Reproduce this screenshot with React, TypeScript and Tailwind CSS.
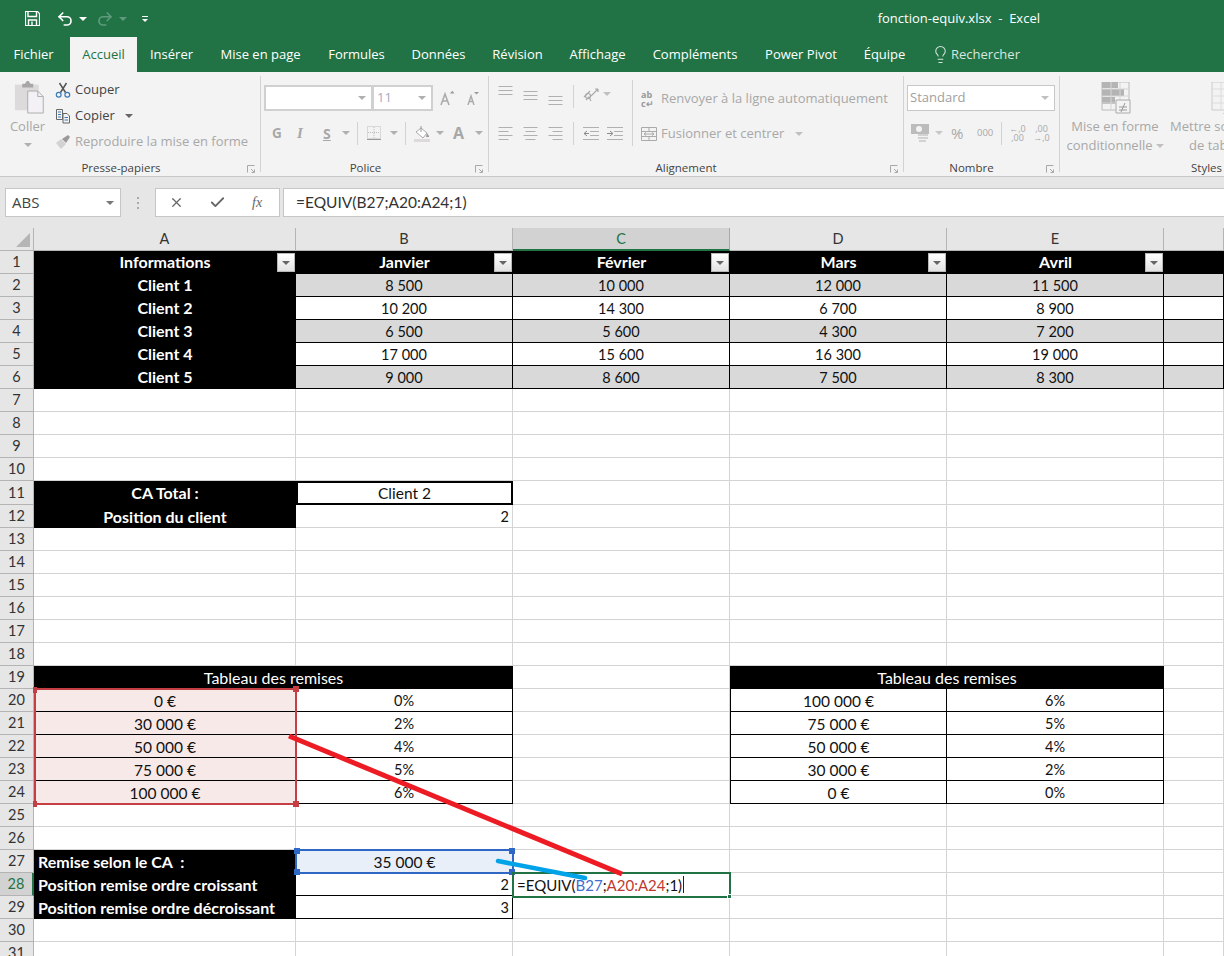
import { Check, Lightbulb, Redo2, Undo2, X } from 'lucide-react';
import { Fragment, ReactNode } from 'react';

const tabs = [
  { label: 'Fichier', w: 'w-[70px] pr-[3px]' },
  { label: 'Accueil', w: 'w-[67px] bg-[#f3f3f3] text-[#217346]' },
  { label: 'Insérer', w: 'w-[69px]' },
  { label: 'Mise en page', w: 'w-[109px]' },
  { label: 'Formules', w: 'w-[83px]' },
  { label: 'Données', w: 'w-[81px]' },
  { label: 'Révision', w: 'w-[77px]' },
  { label: 'Affichage', w: 'w-[83px]' },
  { label: 'Compléments', w: 'w-[112px]' },
  { label: 'Power Pivot', w: 'w-[100px]' },
  { label: 'Équipe', w: 'w-[67px]' },
];

type Cell = { t?: string; c?: string; span?: number; filter?: boolean };

const blank = 'border-r border-b border-[#d4d4d4]';
const boxed = 'border-r border-b border-black justify-center pt-[2px]';
const head = 'bg-black text-white font-bold text-[16px] justify-center';
const top = 'bg-black text-white font-bold text-[16px] justify-center pb-[1px]';
const side = 'bg-black text-white font-bold text-[16px] pl-[4px]';
const grey = 'bg-[#d9d9d9] border-r border-b border-black justify-center pt-[1px]';
const plain = 'bg-white border-r border-b border-black justify-center pt-[1px]';
const pink = 'bg-[#f8e9e9] border-b border-black justify-center text-[15.5px] pt-[1px]';
const num = 'border-r border-b border-black justify-end pr-[3px] pt-[1px]';
const banner = 'bg-black text-white text-[16px] justify-center';

const empty = (n: number): Cell[] => Array.from({ length: n }, () => ({ c: blank }));

const clientRow = (name: string, vals: string[], c: string): Cell[] => [
  { t: name, c: top },
  ...vals.map((t) => ({ t, c })),
  { c },
];

const remiseRow = (a: string, b: string, d: string, e: string): Cell[] => [
  { t: a, c: pink },
  { t: b, c: boxed },
  { c: blank },
  { t: d, c: 'border-l border-r border-b border-black justify-center text-[15.5px] pt-[1px]' },
  { t: e, c: boxed },
  { c: blank },
];

const rows: Record<number, Cell[]> = {
  1: [
    { t: 'Informations', c: top, filter: true },
    { t: 'Janvier', c: top, filter: true },
    { t: 'Février', c: top, filter: true },
    { t: 'Mars', c: top, filter: true },
    { t: 'Avril', c: top, filter: true },
    { c: head },
  ],
  2: clientRow('Client 1', ['8 500', '10 000', '12 000', '11 500'], grey),
  3: clientRow('Client 2', ['10 200', '14 300', '6 700', '8 900'], plain),
  4: clientRow('Client 3', ['6 500', '5 600', '4 300', '7 200'], grey),
  5: clientRow('Client 4', ['17 000', '15 600', '16 300', '19 000'], plain),
  6: clientRow('Client 5', ['9 000', '8 600', '7 500', '8 300'], grey),
  11: [
    { t: 'CA Total :', c: head },
    { t: 'Client 2', c: 'border-2 border-black justify-center text-[15.5px]' },
    ...empty(4),
  ],
  12: [
    { t: 'Position du client', c: head },
    { t: '2', c: 'border-b border-[#d4d4d4] border-r justify-end pr-[3px] pt-[2px]' },
    ...empty(4),
  ],
  19: [
    { t: 'Tableau des remises', c: banner, span: 2 },
    { c: blank },
    { t: 'Tableau des remises', c: banner, span: 2 },
    { c: blank },
  ],
  20: remiseRow('0 €', '0%', '100 000 €', '6%'),
  21: remiseRow('30 000 €', '2%', '75 000 €', '5%'),
  22: remiseRow('50 000 €', '4%', '50 000 €', '4%'),
  23: remiseRow('75 000 €', '5%', '30 000 €', '2%'),
  24: remiseRow('100 000 €', '6%', '0 €', '0%'),
  27: [
    { t: 'Remise selon le CA  :', c: side },
    { t: '35 000 €', c: 'bg-[#e8eff9] justify-center text-[15.5px]' },
    ...empty(4),
  ],
  28: [
    { t: 'Position remise ordre croissant', c: side },
    { t: '2', c: num },
    { c: '' },
    ...empty(3),
  ],
  29: [
    { t: 'Position remise ordre décroissant', c: side },
    { t: '3', c: num },
    ...empty(4),
  ],
};

const rowNumbers = Array.from({ length: 31 }, (_, i) => i + 1);

function Caret({ c = 'border-t-[#b0b0b0]' }: { c?: string }) {
  return <span className={`inline-block w-0 h-0 border-x-[4px] border-x-transparent border-t-[4px] ${c}`} />;
}

function Group({ w, label, launcher = true, pr = 'pr-0', children }: { w: string; label: string; launcher?: boolean; pr?: string; children: ReactNode }) {
  return (
    <div className={`${w} shrink-0 flex flex-col border-r border-[#d2d2d2] mt-[4px] mb-[4px]`}>
      <div className="flex-1 min-h-0">{children}</div>
      <div className="h-[8px] flex items-center">
        <span className={`flex-1 text-center text-[11.5px] text-[#444] whitespace-nowrap ${pr}`}>{label}</span>
        {launcher && (
          <svg className="w-[18px] shrink-0" width="18" height="9" viewBox="0 0 18 9" fill="none" stroke="#a8a8a8">
            <path d="M5.5 8.5v-7h7M9 5l3 3M9.5 8.5h3v-3" />
          </svg>
        )}
      </div>
    </div>
  );
}

function Lines({ w = [14, 14, 14], align = 'left', gap = 4 }: { w?: number[]; align?: string; gap?: number }) {
  const total = (w.length - 1) * gap + 1;
  return (
    <svg width="15" height={total} viewBox={`0 0 15 ${total}`} stroke="#b0b0b0">
      {w.map((len, i) => {
        const x = align === 'left' ? 0.5 : align === 'right' ? 14.5 - len : 7.5 - len / 2;
        return <path key={i} d={`M${x} ${i * gap + 0.5}h${len}`} />;
      })}
    </svg>
  );
}

function Indent({ flip }: { flip?: boolean }) {
  return (
    <svg width="16" height="13" viewBox="0 0 16 13" fill="none" stroke="#b0b0b0">
      <path d="M0 .5h16M7 4.5h9M7 8.5h9M0 12.5h16" />
      {flip ? <path d="M0 6.5h5M3 4l3 2.5L3 9" stroke="#8a8a8a" /> : <path d="M6 6.5H1M4 4L1 6.5 4 9" stroke="#8a8a8a" />}
    </svg>
  );
}

function VDiv({ h = 'h-[23px]', m = '' }: { h?: string; m?: string }) {
  return <span className={`w-px ${h} bg-[#d2d2d2] ${m}`} />;
}

export default function App() {
  return (
    <div className="w-[1224px] h-[956px] overflow-hidden bg-white relative [font-family:'Open_Sans',sans-serif]">
      {/* title bar */}
      <div className="h-[37px] bg-[#217346] flex items-center text-white">
        <svg className="ml-[25px]" width="15" height="15" viewBox="0 0 15 15" fill="none" stroke="#fff">
          <path d="M.5.5h12l2 2v12H.5z" strokeWidth="1.2" />
          <path d="M3 1v4.5h8.5V1" strokeWidth="1.4" />
          <path d="M3.5 14V9h8v5M7 10.5V14" strokeWidth="1.4" />
        </svg>
        <Undo2 className="ml-[16px]" size={18} strokeWidth={2.2} color="#ffffff" />
        <span className="ml-[5px] w-0 h-0 border-x-[4px] border-x-transparent border-t-[4px] border-t-white" />
        <Redo2 className="ml-[9px]" size={18} strokeWidth={2.2} color="#5f9a7d" />
        <span className="ml-[5px] w-0 h-0 border-x-[4px] border-x-transparent border-t-[4px] border-t-[#5f9a7d]" />
        <span className="ml-[15px] flex flex-col items-center gap-[2px]">
          <span className="w-[6px] h-px bg-white" />
          <span className="w-0 h-0 border-x-[3px] border-x-transparent border-t-[3px] border-t-white" />
        </span>
        <span className="ml-auto mr-[184px] text-[13px] whitespace-pre">fonction-equiv.xlsx  -  Excel</span>
      </div>

      {/* tabs */}
      <div className="h-[35px] bg-[#217346] flex text-[13px] text-white">
        {tabs.map((tab) => (
          <div key={tab.label} className={`${tab.w} flex items-center justify-center whitespace-nowrap`}>
            {tab.label}
          </div>
        ))}
        <div className="ml-[13px] flex items-center gap-[1px] text-[#d8e6de]">
          <Lightbulb size={19} strokeWidth={1.3} />
          <span>Rechercher</span>
        </div>
      </div>

      {/* ribbon */}
      <div className="h-[105px] bg-[#f3f3f3] border-b border-[#c8c8c8] flex overflow-hidden">
        <Group w="w-[261px]" label="Presse-papiers" pr="pr-0">
          <div className="flex h-full">
            <div className="w-[55px] flex flex-col items-center text-[13px] text-[#a8a8a8]">
              <svg className="mt-[4px] ml-[4px] shrink-0" width="32" height="34" viewBox="0 0 35 35">
                <path d="M1 4h26v28H1z" fill="#dcdadb" />
                <path d="M9 3h3l2-3h2l2 3h3v4H9z" fill="#a8a6a7" />
                <path d="M15 11h11l6 6v18H15z" fill="#f4f1f6" stroke="#a8a8a8" />
                <path d="M26 11v6h6" fill="none" stroke="#a8a8a8" />
              </svg>
              <span className="mt-[4px] leading-[17px]">Coller</span>
              <span className="mt-[8px] flex"><Caret /></span>
            </div>
            <div className="flex flex-col text-[13px] text-[#444]">
              <div className="h-[26px] mt-[1px] flex items-center gap-[4px]">
                <svg width="16" height="16" viewBox="0 0 16 16" fill="none">
                  <path d="M5.5 10.5L11.5 1M10.5 10.5L4.5 1" stroke="#555" strokeWidth="1.5" />
                  <circle cx="3.7" cy="12.7" r="2.4" stroke="#3b79b8" strokeWidth="1.2" />
                  <circle cx="12.3" cy="12.7" r="2.4" stroke="#3b79b8" strokeWidth="1.2" />
                </svg>
                <span>Couper</span>
              </div>
              <div className="h-[26px] flex items-center gap-[4px]">
                <svg width="16" height="16" viewBox="0 0 16 16" fill="none" stroke="#666">
                  <path d="M1.5 1.5h6v10h-6zM8 5.5h4l2.5 2.5v7H8z" fill="#f3f3f3" />
                  <path d="M3 4h3M3 6.5h3M3 9h3M9.5 9.5h3.5M9.5 12h3.5" stroke="#3b79b8" />
                </svg>
                <span>Copier</span>
                <span className="ml-[6px] flex"><Caret c="border-t-[#666]" /></span>
              </div>
              <div className="h-[26px] flex items-center gap-[4px] text-[#a8a8a8]">
                <svg width="16" height="16" viewBox="0 0 16 16">
                  <path d="M1 9l5-4 5 5-5 5z" fill="#d2d2d2" />
                  <path d="M7 5l6-4 2 2-4 6z" fill="#9a9a9a" />
                </svg>
                <span>Reproduire la mise en forme</span>
              </div>
            </div>
          </div>
        </Group>

        <Group w="w-[228px]" label="Police">
          <div className="flex h-[26px] mt-[9px] ml-[3px] items-center">
            <div className="w-[109px] h-[26px] bg-white border-2 border-[#d0d0d0] flex items-center justify-end pr-[5px]">
              <Caret />
            </div>
            <div className="w-[61px] h-[26px] -ml-[1px] bg-white border-2 border-[#d0d0d0] flex items-center justify-between px-[3px] pr-[5px] text-[13px] text-[#a8a8c0]">
              11
              <Caret />
            </div>
            <svg className="ml-[7px]" width="15" height="16" viewBox="0 0 15 16" fill="none" stroke="#aaa" strokeWidth="1.5">
              <path d="M1 15L5 4l4 11M2.5 11h5" />
              <path d="M10 3.5h4.5L12.2.8z" fill="#999" stroke="none" />
            </svg>
            <svg className="ml-[12px]" width="12" height="14" viewBox="0 0 12 14" fill="none" stroke="#aaa" strokeWidth="1.4">
              <path d="M1 14l3-9 3 9M2 10.5h4" />
              <path d="M7 1h5L9.5 3.5z" fill="#999" stroke="none" />
            </svg>
          </div>
          <div className="flex h-[24px] mt-[10px] items-center text-[#a8a8a8] font-bold text-[14px]">
            <span className="ml-[11px] w-[25px] text-[13.5px]">G</span>
            <span className="w-[26px] italic [font-family:'Liberation_Serif',serif] text-[15px]">I</span>
            <span className="w-[15px] underline">S</span>
            <span className="ml-[4px] flex"><Caret /></span>
            <VDiv m="ml-[7px]" />
            <svg className="ml-[9px]" width="14" height="14" viewBox="0 0 14 14" fill="none" stroke="#bdbdbd" strokeDasharray="1 1">
              <path d="M.5.5h13v12H.5zM7 1v11M1 6.5h12" />
              <path d="M0 13.5h14" strokeDasharray="none" stroke="#999" />
            </svg>
            <span className="ml-[9px] flex"><Caret /></span>
            <VDiv m="ml-[7px]" />
            <svg className="ml-[8px]" width="17" height="17" viewBox="0 0 17 17">
              <path d="M2 7l5-4 6 5-4 5z" fill="#fff" stroke="#aaa" />
              <path d="M7 1v6" stroke="#999" />
              <path d="M13 8l2 3v1h-3z" fill="#999" />
              <path d="M0 14h16v3H0z" fill="#dddada" />
            </svg>
            <span className="ml-[5px] flex"><Caret /></span>
            <span className="ml-[9px] w-[17px] text-[16px]">A</span>
            <span className="ml-[5px] flex"><Caret /></span>
          </div>
        </Group>

        <Group w="w-[415px]" label="Alignement" pr="pr-[2px]">
          <div className="flex h-full">
            <div className="w-[143px] flex flex-col">
              <div className="flex mt-[9px] h-[24px] items-start pl-[9px]">
                <span className="mt-[1px]"><Lines /></span>
                <span className="ml-[10px] mt-[6px]"><Lines /></span>
                <span className="ml-[10px] mt-[11px]"><Lines /></span>
                <VDiv m="ml-[10px]" />
                <svg className="ml-[9px] mt-[2px]" width="16" height="16" viewBox="0 0 16 16" fill="none" stroke="#aaa" strokeWidth="1.2">
                  <path d="M1 10l6-6M3 13l3-3 2 4M8 9l7-7M15 2h-3M15 2v3" />
                  <circle cx="5" cy="9" r="2.5" />
                </svg>
                <span className="ml-[4px] mt-[7px] flex"><Caret c="border-t-[#c0c0c0]" /></span>
              </div>
              <div className="flex mt-[12px] h-[24px] items-center pl-[9px]">
                <Lines w={[14, 10, 14, 10]} align="left" />
                <span className="ml-[10px]"><Lines w={[14, 10, 14, 10]} align="center" /></span>
                <span className="ml-[10px]"><Lines w={[14, 10, 14, 10]} align="right" /></span>
                <VDiv m="ml-[10px]" />
                <span className="ml-[9px]"><Indent /></span>
                <span className="ml-[8px]"><Indent flip /></span>
              </div>
            </div>
            <VDiv h="h-[66px]" m="mt-[4px]" />
            <div className="flex flex-col text-[13px] text-[#a8a8a8] whitespace-nowrap">
              <div className="flex items-center h-[26px] mt-[10px] ml-[8px]">
                <span className="w-[20px] flex flex-col text-[9px] leading-[9px] font-bold text-[#999]">
                  <span>ab</span>
                  <span>c↵</span>
                </span>
                <span>Renvoyer à la ligne automatiquement</span>
              </div>
              <div className="flex items-center h-[26px] mt-[9px] ml-[8px]">
                <svg className="mr-[4px]" width="16" height="16" viewBox="0 0 16 16" fill="none" stroke="#aaa">
                  <path d="M.5 1.5h15v13H.5zM.5 5.5h15M.5 10.5h15M8 1.5v4M8 10.5v4M3 8h10M3 8l2-1.5M3 8l2 1.5M13 8l-2-1.5M13 8l-2 1.5" />
                </svg>
                <span>Fusionner et centrer</span>
                <span className="ml-[11px] flex"><Caret c="border-t-[#c0c0c0]" /></span>
              </div>
            </div>
          </div>
        </Group>

        <Group w="w-[156px]" label="Nombre" pr="pr-[2px]">
          <div className="ml-[3px] mt-[9px] w-[148px] h-[26px] bg-white border border-[#c8c8c8] flex items-center justify-between pl-[2px] pr-[5px] text-[13px] text-[#a0a0a0]">
            Standard
            <Caret c="border-t-[#c0c0c0]" />
          </div>
          <div className="flex items-center h-[24px] mt-[10px] text-[#a8a8a8]">
            <svg className="ml-[7px]" width="19" height="18" viewBox="0 0 19 18" fill="none">
              <path d="M0 0h18v10H0z" fill="#bcbcbc" />
              <circle cx="8" cy="5" r="3" fill="#f3f3f3" />
              <path d="M7 11h10M7 14h10M8 17h7" stroke="#c8c8c8" strokeWidth="1.5" />
            </svg>
            <span className="ml-[5px] flex"><Caret c="border-t-[#c8c8c8]" /></span>
            <span className="ml-[8px] text-[15px] w-[16px]">%</span>
            <span className="ml-[10px] text-[9.5px] w-[14px]">000</span>
            <VDiv m="ml-[10px]" />
            <span className="ml-[8px] w-[15px] flex flex-col items-center text-[9px] leading-[9px]">
              <span>←,0</span>
              <span>,00</span>
            </span>
            <span className="ml-[9px] w-[15px] flex flex-col items-center text-[9px] leading-[9px]">
              <span>,00</span>
              <span>→,0</span>
            </span>
          </div>
        </Group>

        <div className="flex-1 flex flex-col mt-[4px] mb-[4px]">
          <div className="flex-1 min-h-0 flex text-[13px] text-[#a8a8a8] whitespace-nowrap">
            <div className="w-[110px] flex flex-col items-center">
              <svg width="30" height="36" viewBox="0 0 30 36" className="ml-[2px] mt-[6px] shrink-0">
                <path d="M1 0h27v28H1z" fill="#f3f3f3" stroke="#bbb" />
                <path d="M1 0h16v6H1zM1 7h22v7H1zM1 15h13v7H1z" fill="#b4b4b4" />
                <path d="M1 7h27M1 14h27M1 21h27M10 0v28M19 0v28" stroke="#d5d5d5" />
                <path d="M15 18h14v13H15z" fill="#f3f3f3" stroke="#aaa" />
                <path d="M18 25h8M18 28h8M24 21l-4 9" stroke="#999" fill="none" />
              </svg>
              <span className="leading-[19px] mt-[-1px]">Mise en forme</span>
              <span className="leading-[19px] flex items-center gap-[3px]">conditionnelle <Caret c="border-t-[#c0c0c0]" /></span>
            </div>
            <div className="w-[54px] flex flex-col">
              <svg width="30" height="36" viewBox="0 0 30 36" className="ml-[41px] mt-[6px] shrink-0">
                <path d="M1 0h27v28H1z" fill="#f3f3f3" stroke="#ccc" />
                <path d="M1 7h27M1 14h27M1 21h27M10 0v28M19 0v28" stroke="#ddd" />
                <path d="M12 32l16-16v16z" fill="#aaa" />
              </svg>
              <span className="leading-[19px] mt-[-1px]">Mettre sous</span>
              <span className="leading-[19px] ml-[19px]">de tableau</span>
            </div>
          </div>
          <div className="h-[8px] flex items-center pl-[131px] text-[11.5px] text-[#444]">Styles</div>
        </div>
      </div>

      {/* formula bar */}
      <div className="h-[51px] bg-[#e6e6e6] flex items-start pt-[11px] text-[#444]">
        <div className="ml-[5px] w-[116px] h-[29px] bg-white border border-[#c6c6c6] flex items-center justify-between px-[6px] text-[15px]">
          ABS
          <Caret c="border-t-[#777]" />
        </div>
        <div className="w-[34px] h-[29px] flex flex-col items-center justify-center gap-[3px]">
          <span className="w-[2px] h-[2px] bg-[#aaa]" />
          <span className="w-[2px] h-[2px] bg-[#aaa]" />
          <span className="w-[2px] h-[2px] bg-[#aaa]" />
        </div>
        <div className="w-[125px] h-[29px] bg-white border border-[#c6c6c6] flex items-center">
          <X className="ml-[13px]" size={15} color="#666" strokeWidth={2} />
          <Check className="ml-[25px]" size={17} color="#666" strokeWidth={2.6} />
          <span className="ml-[26px] italic text-[14px] [font-family:'Liberation_Serif',serif] text-[#666]">fx</span>
        </div>
        <div className="ml-[3px] flex-1 h-[29px] bg-white border-y border-l border-[#c6c6c6] flex items-center pl-[12px] text-[15.5px] text-[#333] [font-family:'Lato',sans-serif]">
          =EQUIV(B27;A20:A24;1)
        </div>
      </div>

      {/* sheet */}
      <div className="relative [font-family:'Lato',sans-serif] text-[14.5px] leading-[20px] text-[#111]">
        <div className="grid grid-cols-[34px_262px_217px_217px_217px_217px_60px] auto-rows-[minmax(23px,auto)]">
          <div className="bg-[#e6e6e6] border-r border-b border-[#b4b4b4] flex items-end justify-end pr-[3px] pb-[3px]">
            <span className="w-0 h-0 border-l-[14px] border-l-transparent border-b-[14px] border-b-[#b5b5b5]" />
          </div>
          {['A', 'B', 'C', 'D', 'E', ''].map((col) => (
            <div
              key={col}
              className={
                col === 'C'
                  ? 'bg-[#d2d2d2] text-[#217346] border-r border-[#a8a8a8] border-b-2 border-b-[#217346] flex items-center justify-center'
                  : 'bg-[#e6e6e6] text-[#333] border-r border-b border-[#b4b4b4] flex items-center justify-center'
              }
            >
              {col}
            </div>
          ))}
          {rowNumbers.map((n) => (
            <Fragment key={n}>
              <div
                className={`${n === 11 ? 'h-[24px]' : 'h-[23px]'} ${
                  n === 28
                    ? 'bg-[#d2d2d2] text-[#217346] border-r-2 border-r-[#217346] border-b border-b-[#b4b4b4] flex items-center justify-center'
                    : 'bg-[#e6e6e6] text-[#333] border-r border-b border-[#b4b4b4] flex items-center justify-center'
                }`}
              >
                {n}
              </div>
              {(rows[n] ?? empty(6)).map((cell, i) => (
                <div
                  key={i}
                  className={`relative flex items-center whitespace-pre ${cell.span === 2 ? 'col-span-2' : ''} ${cell.c ?? blank}`}
                >
                  {cell.t}
                  {cell.filter && (
                    <span className="absolute right-[1px] top-[2px] w-[18px] h-[19px] bg-gradient-to-b from-white to-[#e2e2e2] border border-[#b8b8b8] flex items-center justify-center">
                      <Caret c="border-t-[#666]" />
                    </span>
                  )}
                  {n === 28 && i === 2 && (
                    <span className="pl-[4px] flex items-center text-[15px]">
                      =EQUIV(<span className="text-[#3f6fd1]">B27</span>;<span className="text-[#c0392f]">A20:A24</span>;1)
                      <span className="ml-[1px] w-px h-[17px] bg-[#222]" />
                    </span>
                  )}
                </div>
              ))}
            </Fragment>
          ))}
        </div>

        {/* range selected for A20:A24 */}
        <div className="absolute left-[34px] top-[460px] w-[263px] h-[117px] border-2 border-[#c43e44]">
          <span className="absolute -left-[3px] -top-[3px] w-[4px] h-[6px] bg-[#c43e44]" />
          <span className="absolute -right-[4px] -top-[4px] w-[6px] h-[6px] bg-[#c43e44]" />
          <span className="absolute -left-[3px] -bottom-[4px] w-[4px] h-[6px] bg-[#c43e44]" />
          <span className="absolute -right-[4px] -bottom-[4px] w-[6px] h-[6px] bg-[#c43e44]" />
        </div>
        {/* range selected for B27 */}
        <div className="absolute left-[295px] top-[621px] w-[219px] h-[25px] border-2 border-[#2f67c4]">
          <span className="absolute -left-[3px] -top-[3px] w-[6px] h-[6px] bg-[#2f67c4]" />
          <span className="absolute -right-[3px] -top-[3px] w-[6px] h-[6px] bg-[#2f67c4]" />
          <span className="absolute -left-[3px] -bottom-[3px] w-[6px] h-[6px] bg-[#2f67c4]" />
          <span className="absolute -right-[3px] -bottom-[3px] w-[6px] h-[6px] bg-[#2f67c4]" />
        </div>
        {/* active cell C28 */}
        <div className="absolute left-[512px] top-[644px] w-[219px] h-[26px] border-2 border-[#217346]">
          <span className="absolute -right-[3px] -bottom-[3px] w-[5px] h-[5px] bg-[#217346] border border-white" />
        </div>

        {/* annotation arrows painted on the capture */}
        <svg className="absolute left-0 top-0 pointer-events-none" width="1224" height="728" viewBox="0 0 1224 728" fill="none">
          <path d="M289 508L622 646" stroke="#ed1c24" strokeWidth="5" />
          <path d="M498 633L585 650" stroke="#00a2e8" strokeWidth="4.5" strokeLinecap="round" />
        </svg>
      </div>
    </div>
  );
}
